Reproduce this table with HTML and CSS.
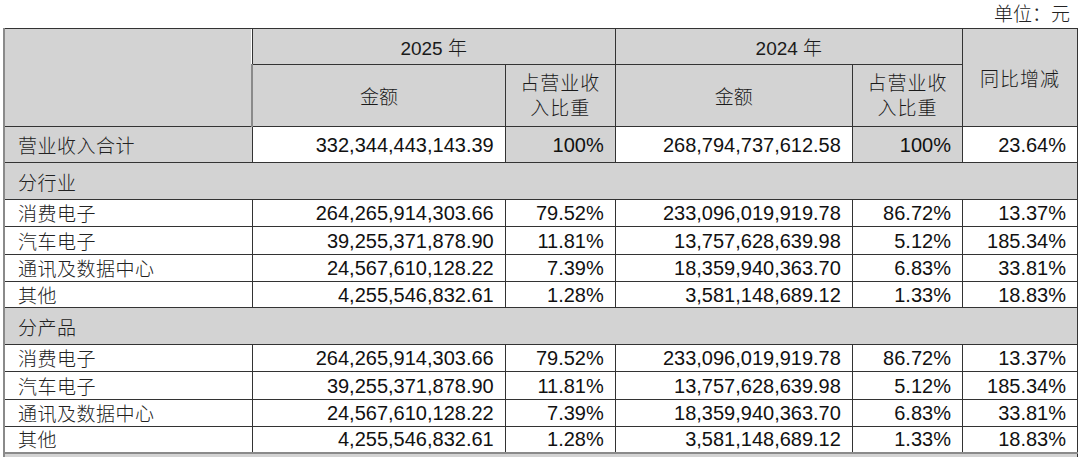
FILE: index.html
```html
<!DOCTYPE html>
<html lang="zh-CN">
<head>
<meta charset="utf-8">
<link rel="stylesheet" href="styles.css">
</head>
<body>
<div class="unit">单位：元</div>
<table class="rev">
  <colgroup>
    <col class="c1"><col class="c2"><col class="c3"><col class="c4"><col class="c5"><col class="c6">
  </colgroup>
  <thead>
    <tr class="h1">
      <th rowspan="2" class="g"></th>
      <th colspan="2" class="g">2025 年</th>
      <th colspan="2" class="g">2024 年</th>
      <th rowspan="2" class="g yoy">同比增减</th>
    </tr>
    <tr class="h2">
      <th class="g">金额</th>
      <th class="g pct"><span>占营业收</span><span>入比重</span></th>
      <th class="g">金额</th>
      <th class="g pct"><span>占营业收</span><span>入比重</span></th>
    </tr>
  </thead>
  <tbody>
    <tr class="total">
      <td class="g lbl">营业收入合计</td>
      <td class="num">332,344,443,143.39</td>
      <td class="num g">100%</td>
      <td class="num">268,794,737,612.58</td>
      <td class="num g">100%</td>
      <td class="num">23.64%</td>
    </tr>
    <tr class="sec"><td colspan="6" class="g lbl">分行业</td></tr>
    <tr class="d r1"><td class="lbl">消费电子</td><td class="num">264,265,914,303.66</td><td class="num">79.52%</td><td class="num">233,096,019,919.78</td><td class="num">86.72%</td><td class="num">13.37%</td></tr>
    <tr class="d r2"><td class="lbl">汽车电子</td><td class="num">39,255,371,878.90</td><td class="num">11.81%</td><td class="num">13,757,628,639.98</td><td class="num">5.12%</td><td class="num">185.34%</td></tr>
    <tr class="d r3"><td class="lbl">通讯及数据中心</td><td class="num">24,567,610,128.22</td><td class="num">7.39%</td><td class="num">18,359,940,363.70</td><td class="num">6.83%</td><td class="num">33.81%</td></tr>
    <tr class="d r4"><td class="lbl">其他</td><td class="num">4,255,546,832.61</td><td class="num">1.28%</td><td class="num">3,581,148,689.12</td><td class="num">1.33%</td><td class="num">18.83%</td></tr>
    <tr class="sec"><td colspan="6" class="g lbl">分产品</td></tr>
    <tr class="d r1"><td class="lbl">消费电子</td><td class="num">264,265,914,303.66</td><td class="num">79.52%</td><td class="num">233,096,019,919.78</td><td class="num">86.72%</td><td class="num">13.37%</td></tr>
    <tr class="d r2"><td class="lbl">汽车电子</td><td class="num">39,255,371,878.90</td><td class="num">11.81%</td><td class="num">13,757,628,639.98</td><td class="num">5.12%</td><td class="num">185.34%</td></tr>
    <tr class="d r3"><td class="lbl">通讯及数据中心</td><td class="num">24,567,610,128.22</td><td class="num">7.39%</td><td class="num">18,359,940,363.70</td><td class="num">6.83%</td><td class="num">33.81%</td></tr>
    <tr class="d r4"><td class="lbl">其他</td><td class="num">4,255,546,832.61</td><td class="num">1.28%</td><td class="num">3,581,148,689.12</td><td class="num">1.33%</td><td class="num">18.83%</td></tr>
    <tr class="sec tail"><td colspan="6" class="g lbl">&nbsp;</td></tr>
  </tbody>
</table>
</body>
</html>
```
FILE: styles.css
```css
html, body {
  margin: 0;
  padding: 0;
  background: #ffffff;
}
body {
  font-family: "Liberation Sans", "Noto Sans CJK SC", Arial, sans-serif;
  color: #111;
  overflow: hidden;
}
.unit {
  height: 28px;
  box-sizing: border-box;
  text-align: right;
  padding-right: 10px;
  padding-top: 1px;
  font-size: 19px;
  line-height: 24px;
  font-family: "Noto Sans CJK SC", sans-serif;
  font-weight: 300;
  color: #222;
}
.rev {
  margin-left: 3px;
  width: 1075px;
  table-layout: fixed;
  border-collapse: collapse;
  border-left: 2px solid #8a8a8a;
  border-top: 1px solid #111;
}
.c1 { width: 248px; }
.c2 { width: 253px; }
.c3 { width: 110px; }
.c4 { width: 237px; }
.c5 { width: 110px; }
.c6 { width: 115px; }
.rev th, .rev td {
  border: 1px solid #333;
  padding: 0;
  overflow: hidden;
  white-space: nowrap;
}
.rev th:first-child, .rev td:first-child {
  border-left: 2px solid #8a8a8a;
}
.g { background: #d3d3d3; }
.rev th {
  font-family: "Liberation Sans", "Noto Sans CJK SC", sans-serif;
  font-weight: 300;
  font-size: 19px;
  text-align: center;
  vertical-align: middle;
  color: #1a1a1a;
}
.h1 { height: 36px; }
.h2 { height: 62px; }
.pct span {
  display: block;
  line-height: 25px;
  letter-spacing: 1px;
}
.yoy { letter-spacing: 1px; }
.total { height: 36px; }
.sec { height: 37px; }
.r1 { height: 27px; }
.r2 { height: 28px; }
.r3 { height: 27px; }
.r4 { height: 26px; }
.lbl {
  text-align: left;
  padding-left: 13px !important;
  font-family: "Noto Sans CJK SC", sans-serif;
  font-size: 19px;
  font-weight: 300;
  letter-spacing: 0.5px;
  color: #222;
  vertical-align: middle;
}
.num {
  text-align: right;
  padding-right: 11px !important;
  font-size: 20px;
  line-height: 22px;
  vertical-align: middle;
  color: #111;
}
.rev tr.d td { line-height: 22px; }
.tail td { border-top: 2px solid #8a8a8a; }
```
